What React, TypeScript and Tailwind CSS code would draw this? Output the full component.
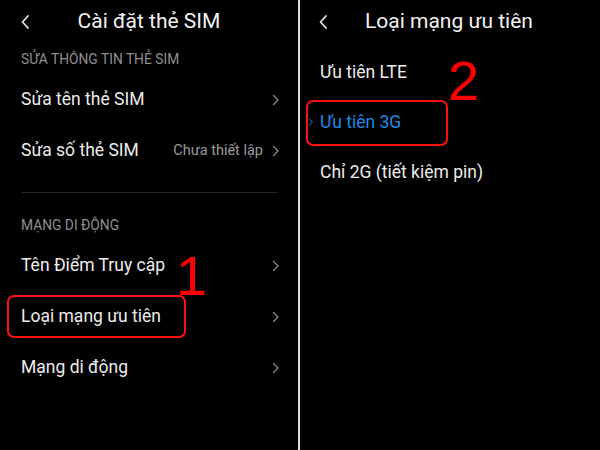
import React from "react";

const Chevron = ({ className = "" }: { className?: string }) => (
  <svg width="8" height="12" viewBox="0 0 8 12" className={className} fill="none">
    <polyline points="1.5,1.5 6,6 1.5,10.5" stroke="currentColor" strokeWidth="1.3" strokeLinecap="round" strokeLinejoin="round" />
  </svg>
);

const Back = () => (
  <svg width="10" height="16" viewBox="0 0 10 16" fill="none">
    <polyline points="8,2 2.5,8 8,14" stroke="#e6e6e6" strokeWidth="1.8" strokeLinecap="round" strokeLinejoin="round" />
  </svg>
);

const Row = ({ label, value, children }: { label: string; value?: string; children?: React.ReactNode }) => (
  <div className="relative h-[51px] flex items-center pl-[21px] pr-[18px]">
    <span className="text-[17.5px] text-[#ececec] flex-1">{label}</span>
    {value && <span className="text-[14.5px] text-[#9a9a9a] mr-[9px]">{value}</span>}
    <Chevron className="text-[#8a8a8a]" />
    {children}
  </div>
);

const SectionHeader = ({ label }: { label: string }) => (
  <div className="h-[30px] flex items-center pl-[21px] text-[13.8px] text-[#8f8f8f]">{label}</div>
);

export default function App() {
  return (
    <div className="w-[600px] h-[450px] bg-black flex overflow-hidden" style={{ fontFamily: "Roboto, 'Noto Sans', sans-serif" }}>
      {/* left screen */}
      <div className="w-[298px] h-full flex flex-col">
        <div className="relative h-[44px] flex items-center justify-center">
          <div className="absolute left-[20px] top-[14px]">
            <Back />
          </div>
          <span className="text-[21px] text-[#f2f2f2]">Cài đặt thẻ SIM</span>
        </div>
        <SectionHeader label="SỬA THÔNG TIN THẺ SIM" />
        <Row label="Sửa tên thẻ SIM" />
        <Row label="Sửa số thẻ SIM" value="Chưa thiết lập" />
        <div className="mt-[16px] mx-[21px] h-px bg-[#262626]" />
        <div className="h-[17px]" />
        <SectionHeader label="MẠNG DI ĐỘNG" />
        <Row label="Tên Điểm Truy cập">
          <span className="absolute left-[176px] top-[8px] text-[56px] leading-none text-[#ff0000]" style={{ fontFamily: "'Liberation Sans', Arial, sans-serif" }}>1</span>
        </Row>
        <Row label="Loại mạng ưu tiên">
          <div className="absolute left-[7px] top-[4px] w-[179px] h-[43px] border-2 border-[#ff1010] rounded-[7px]" />
        </Row>
        <Row label="Mạng di động" />
      </div>

      <div className="w-[2px] h-full bg-[#dcdcdc]" />

      {/* right screen */}
      <div className="flex-1 h-full flex flex-col">
        <div className="relative h-[44px] flex items-center pl-[65px]">
          <div className="absolute left-[18px] top-[14px]">
            <Back />
          </div>
          <span className="text-[21px] text-[#f2f2f2]">Loại mạng ưu tiên</span>
        </div>
        <div className="h-[3px]" />
        <div className="relative h-[50px] flex items-center pl-[20px]">
          <span className="text-[17.5px] text-[#ececec]">Ưu tiên LTE</span>
          <span className="absolute left-[148px] top-[6px] text-[56px] leading-none text-[#ff0000]" style={{ fontFamily: "'Liberation Sans', Arial, sans-serif" }}>2</span>
        </div>
        <div className="relative h-[50px] flex items-center pl-[8px]">
          <Chevron className="text-[#1e8ae6] mr-[6px] w-[6px]" />
          <span className="text-[17.5px] text-[#1e8ae6]">Ưu tiên 3G</span>
          <div className="absolute left-[6px] top-[3px] w-[142px] h-[46px] border-2 border-[#ff1010] rounded-[7px]" />
        </div>
        <div className="h-[50px] flex items-center pl-[20px]">
          <span className="text-[17.5px] text-[#ececec]">Chỉ 2G (tiết kiệm pin)</span>
        </div>
      </div>
    </div>
  );
}
